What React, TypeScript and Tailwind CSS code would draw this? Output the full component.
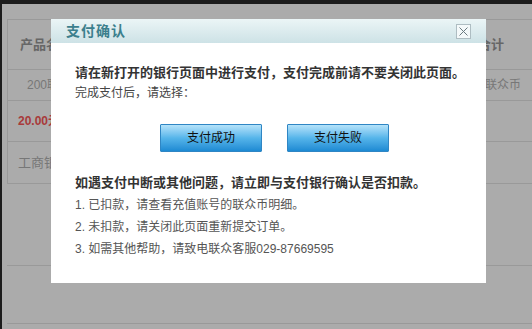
import React from 'react';

const font = { fontFamily: '"Liberation Sans", "Noto Sans CJK SC", sans-serif' };

const PayButton: React.FC<{ label: string }> = ({ label }) => (
  <button className="w-[102px] h-[28px] border border-[#2f86c4] bg-gradient-to-b from-[#b4e3fa] via-[#55b5ea] to-[#1c8ad3] text-[12px] text-[#111] rounded-[1px]">
    {label}
  </button>
);

const App: React.FC = () => {
  return (
    <div className="relative w-[532px] h-[329px] overflow-hidden bg-[#1c1c1c]" style={font}>
      {/* page behind the mask */}
      <div className="absolute left-[2px] top-[4px] right-0 bottom-0 bg-[#ababab]">
        <div className="mt-[15px] ml-[5px] border-t border-[#999]">
          <div className="border-l border-[#999]">
            <div className="h-[50px] flex items-center justify-between border-b border-[#999] text-[13px] font-bold text-[#666]">
              <span className="pl-[12px]">产品名称</span>
              <span className="pr-[28px]">合计</span>
            </div>
            <div className="h-[31px] flex items-center justify-between border-b border-[#999] text-[12px] text-[#777]">
              <span className="pl-[19px]">200联众币</span>
              <span className="pr-[11px]">200联众币</span>
            </div>
            <div className="h-[41px] flex items-center border-b border-[#999] text-[12px] font-bold text-[#a83a3a]">
              <span className="pl-[10px]">20.00元</span>
            </div>
            <div className="h-[42px] flex items-center border-b border-[#999] text-[13px] text-[#777]">
              <span className="pl-[10px]">工商银行</span>
            </div>
          </div>
          <div className="h-[82px] border-b border-[#999]" />
          <div className="h-[58px] border-b border-[#999]" />
        </div>
      </div>

      {/* dialog */}
      <div className="absolute left-[51px] top-[19px] w-[435px] h-[264px] bg-white">
        <div className="h-[24px] flex items-center justify-between bg-gradient-to-b from-[#ebf5f6] to-[#cde2e6] pl-[15px] pr-[15px]">
          <span className="text-[14px] font-bold text-[#3c7f8d] tracking-[1px]">支付确认</span>
          <button className="w-[15px] h-[15px] border border-[#aebdc2] bg-[#f4f9fa] flex items-center justify-center">
            <svg width="9" height="9" viewBox="0 0 9 9">
              <path d="M0.5 0.5 L8.5 8.5 M8.5 0.5 L0.5 8.5" stroke="#6b7a80" strokeWidth="1" />
            </svg>
          </button>
        </div>
        <div className="pl-[24px] pt-[19px]">
          <p className="text-[13px] leading-[21px] font-bold text-[#333]">
            请在新打开的银行页面中进行支付，支付完成前请不要关闭此页面。
          </p>
          <p className="text-[12px] leading-[21px] text-[#444]">完成支付后，请选择：</p>
          <div className="flex gap-[25px] mt-[20px] ml-[85px]">
            <PayButton label="支付成功" />
            <PayButton label="支付失败" />
          </div>
          <p className="mt-[20px] text-[13px] leading-[22px] font-bold text-[#333]">
            如遇支付中断或其他问题，请立即与支付银行确认是否扣款。
          </p>
          <ul className="text-[12px] leading-[22px] text-[#555]">
            <li>1. 已扣款，请查看充值账号的联众币明细。</li>
            <li>2. 未扣款，请关闭此页面重新提交订单。</li>
            <li>3. 如需其他帮助，请致电联众客服029-87669595</li>
          </ul>
        </div>
      </div>
    </div>
  );
};

export default App;
